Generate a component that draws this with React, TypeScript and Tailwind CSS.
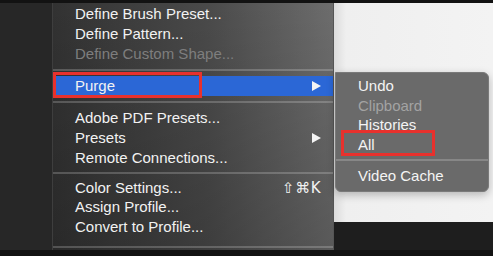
const font = { fontFamily: '"Liberation Sans", Arial, sans-serif' };

function Arrow() {
  return (
    <svg width="9" height="10" viewBox="0 0 9 10" className="shrink-0">
      <polygon points="0,0 9,5 0,10" fill="#f4f4f4" />
    </svg>
  );
}

function Sep({ className = "" }: { className?: string }) {
  return <div className={"h-[2px] bg-white/20 " + className} />;
}

function Row({
  label,
  disabled,
  active,
  arrow,
  shortcut,
  h = "h-[20px]",
}: {
  label: string;
  disabled?: boolean;
  active?: boolean;
  arrow?: boolean;
  shortcut?: string;
  h?: string;
}) {
  return (
    <div
      className={
        "flex items-center pl-[22px] pr-[12px] text-[15px] leading-[20px] " +
        h +
        (active ? " bg-[#2b67d6]" : "") +
        (disabled ? " text-[#7e7e7e]" : " text-[#f2f2f2]")
      }
    >
      <span className="flex-1 whitespace-nowrap">{label}</span>
      {arrow && <Arrow />}
      {shortcut && (
        <span
          className="text-[15px] tracking-[0.5px]"
          style={{ fontFamily: '"DejaVu Sans", sans-serif' }}
        >
          {shortcut}
        </span>
      )}
    </div>
  );
}

function SubRow({ label, disabled }: { label: string; disabled?: boolean }) {
  return (
    <div
      className={
        "h-[19.5px] pl-[22px] text-[15px] leading-[19.5px] whitespace-nowrap " +
        (disabled ? "text-[#a3a3a3]" : "text-[#f4f4f4]")
      }
    >
      {label}
    </div>
  );
}

export default function App() {
  return (
    <div
      className="relative w-[493px] h-[256px] overflow-hidden bg-[#131313] flex flex-col"
      style={font}
    >
      <div className="h-[3px] bg-[#121212]" />
      <div className="flex h-[247px]">
        {/* left workspace */}
        <div className="w-[52px] bg-[#272727]" />

        {/* main menu */}
        <div className="w-[282px] border-l border-[#3e3e3e] border-r border-r-[#555555] bg-[linear-gradient(to_bottom,rgba(0,0,0,0),rgba(0,0,0,0.18)),linear-gradient(to_right,#323232,#4a4a4a_55%,#6d6d6d)] flex flex-col pt-[1px]">
          <Row label="Define Brush Preset..." />
          <Row label="Define Pattern..." />
          <Row label="Define Custom Shape..." disabled />
          <Sep className="my-[5px]" />
          <Row label="Purge" active arrow />
          <Sep className="my-[5px]" />
          <Row label="Adobe PDF Presets..." />
          <Row label="Presets" arrow />
          <Row label="Remote Connections..." />
          <Sep className="mt-[4px] mb-[4px]" />
          <Row label="Color Settings..." shortcut="⇧⌘K" h="h-[19.5px]" />
          <Row label="Assign Profile..." h="h-[19.5px]" />
          <Row label="Convert to Profile..." h="h-[19.5px]" />
          <Sep className="mt-[9px]" />
        </div>

        {/* right canvas */}
        <div className="flex-1 flex flex-col">
          <div className="h-[219px] bg-[linear-gradient(to_right,#dcdcdc,#efefef_12px,#f3f3f3)]" />
          <div className="flex-1 bg-[#1e1e1e]" />
        </div>
      </div>
      <div className="flex-1 bg-[#121212]" />

      {/* purge submenu */}
      <div className="absolute left-[335px] top-[72px] w-[154px] h-[120px] rounded-r-[6px] rounded-bl-[6px] bg-[#6a6a6a] border border-[#7a7a7a] shadow-[0_3px_8px_rgba(0,0,0,0.25)] pt-[3px]">
        <SubRow label="Undo" />
        <SubRow label="Clipboard" disabled />
        <SubRow label="Histories" />
        <SubRow label="All" />
        <div className="h-[2px] bg-white/20 mt-[5px] mb-[5px]" />
        <div className="h-[20px] pl-[22px] text-[15px] leading-[20px] text-[#f4f4f4]">Video Cache</div>
      </div>

      {/* red highlight boxes */}
      <div className="absolute left-[53px] top-[72px] w-[149px] h-[26px] border-[3px] border-[#e8312d]" />
      <div className="absolute left-[341px] top-[130px] w-[94px] h-[26px] border-[3px] border-[#e8312d]" />
    </div>
  );
}
